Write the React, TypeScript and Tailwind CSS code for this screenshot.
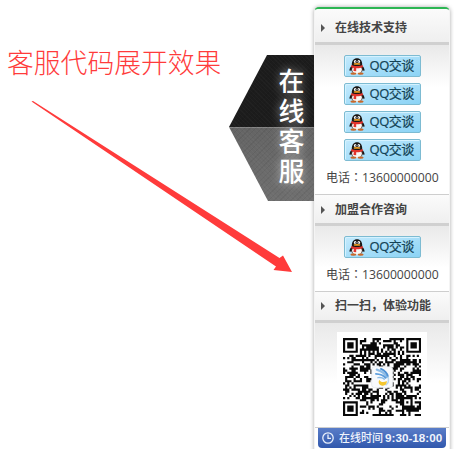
import type { ReactNode } from "react";

const QR_SIZE = 37;

function finderCell(x: number, y: number): boolean | null {
  const corners = [
    [0, 0],
    [QR_SIZE - 7, 0],
    [0, QR_SIZE - 7],
  ];
  for (const [cx, cy] of corners) {
    const dx = x - cx;
    const dy = y - cy;
    if (dx >= -1 && dx <= 7 && dy >= -1 && dy <= 7) {
      const ring = Math.max(Math.abs(dx - 3), Math.abs(dy - 3));
      return ring === 3 || ring <= 1;
    }
  }
  const ax = Math.abs(x - 30);
  const ay = Math.abs(y - 30);
  if (ax <= 2 && ay <= 2) return Math.max(ax, ay) !== 1;
  if (x === 6) return y % 2 === 0;
  if (y === 6) return x % 2 === 0;
  return null;
}

function qrPath(): string {
  let seed = 7919;
  let d = "";
  for (let y = 0; y < QR_SIZE; y++) {
    for (let x = 0; x < QR_SIZE; x++) {
      seed = (seed * 48271) % 2147483647;
      const fixed = finderCell(x, y);
      const on = fixed === null ? seed / 2147483647 < 0.54 : fixed;
      if (on) d += `M${x} ${y}h1.03v1.03h-1.03z`;
    }
  }
  return d;
}

function QrCode() {
  return (
    <div className="mx-auto flex h-[90px] w-[90px] items-center justify-center bg-white">
      <svg width="78" height="78" viewBox="0 0 37 37">
        <path d={qrPath()} fill="#080808" />
        <rect x="13.6" y="13.6" width="10" height="10" rx="1.4" fill="#f8fafc" stroke="#dde2e6" strokeWidth=".3" />
        <g fill="none" strokeLinecap="round">
          <path d="M16 15c2 .6 3.8 1.6 4.8 3.6" stroke="#8dbce6" strokeWidth="1" />
          <path d="M18 14.7c1.8.8 2.9 1.9 3.3 3.6" stroke="#4d91d4" strokeWidth=".9" />
          <path d="M15.6 17c2 .1 3.5.6 4.6 1.9" stroke="#5b9ddd" strokeWidth=".8" />
          <path d="M16.6 18.8c1.4-.2 2.2 0 3 .7" stroke="#8dbce6" strokeWidth=".7" />
          <path d="M21.4 18.5c.5 1.8 0 3-1 3.7" stroke="#b9d8ef" strokeWidth=".7" />
        </g>
        <path d="M17.2 19.8c.5 1.1 2 1.5 3.6.6c.1 1.6-.9 2.3-2.1 2.2c-1.5-.2-2.2-1.3-1.5-2.8z" fill="#f3c62f" />
      </svg>
    </div>
  );
}

function Penguin() {
  return (
    <svg width="16" height="17" viewBox="0 0 16 17" className="shrink-0">
      <path d="M3.5 7C1.5 8.5.2 10.8.5 12.6c.5.5 1.5-.1 2.2-.9zM12.5 7c2 1.5 3.3 3.8 3 5.6c-.5.5-1.5-.1-2.2-.9z" fill="#171717" />
      <ellipse cx="8" cy="10.8" rx="6" ry="5.2" fill="#3a2420" />
      <ellipse cx="8" cy="11.6" rx="4.9" ry="4.3" fill="#f8f8f5" />
      <ellipse cx="4.4" cy="15.6" rx="3" ry="1.2" fill="#c9682a" />
      <ellipse cx="11.6" cy="15.6" rx="3" ry="1.2" fill="#c9682a" />
      <path d="M2.8 7.2C2.6 2.6 4.8.3 8 .3s5.4 2.3 5.2 6.9c-1.3 1.3-9.1 1.3-10.4 0z" fill="#191716" />
      <ellipse cx="6.2" cy="3.5" rx="1.3" ry="1.5" fill="#fff" />
      <ellipse cx="9.8" cy="3.5" rx="1.3" ry="1.5" fill="#fff" />
      <circle cx="6.7" cy="3.8" r=".6" fill="#111" />
      <circle cx="9.3" cy="3.8" r=".6" fill="#111" />
      <ellipse cx="8" cy="5.9" rx="3.3" ry=".95" fill="#f0a022" />
      <path d="M2.4 7.1c2.8 1.3 8.4 1.3 11.2 0l.4 2c-1.9 1-4.6 1.3-6.8 1.2v3l-2.7-.2l.3-3C3.8 9.7 2.7 9.3 2 9z" fill="#e2342d" />
    </svg>
  );
}

function ChatButton() {
  return (
    <div className="mx-auto flex h-[22px] w-[77px] items-center rounded-[2px] border border-[#7dbbd2] bg-linear-to-br from-[#c3eafd] to-[#8bd3f5] pl-[4px] shadow-[inset_1px_1px_0_#d5f2ff]">
      <Penguin />
      <span className="ml-[5px] pb-[2px] text-[13px] leading-[18px] tracking-[-0.45px] whitespace-nowrap text-[#124255] [-webkit-text-stroke:0.2px_#124255]">
        QQ交谈
      </span>
    </div>
  );
}

function SectionTitle({ children, className }: { children: ReactNode; className: string }) {
  return (
    <div className={`flex items-center border-b-[3px] border-[#d0d0d0] bg-linear-to-b from-[#fbfbfb] to-[#efefef] pl-[6px] ${className}`}>
      <span className="h-0 w-0 border-y-4 border-l-4 border-y-transparent border-l-[#555]" />
      <h2 className="ml-[10px] text-[12px] leading-[18px] font-bold whitespace-nowrap text-[#444]">{children}</h2>
    </div>
  );
}

function Phone() {
  return (
    <p className="pl-[11px] text-[12px] leading-[18px] whitespace-nowrap text-[#444]">
      电话<span className="font-['Noto_Sans_CJK_TC',sans-serif]">：</span>
      <span className="font-['Open_Sans'] text-[12.2px]">13600000000</span>
    </p>
  );
}

function SideTab() {
  return (
    <div className="mt-[55px] h-[146px] w-[85px] bg-[linear-gradient(#1c1c1c_0,#1c1c1c_72px,#858585_72px,#858585_73px,#646464_73px,#6f6f6f_100%)] [clip-path:polygon(38px_0,100%_0,100%_100%,39px_100%,0_72px)]">
      <div className="flex h-full w-full justify-center bg-[repeating-linear-gradient(45deg,rgba(255,255,255,.025)_0_1px,transparent_1px_3px),repeating-linear-gradient(-45deg,rgba(0,0,0,.06)_0_1px,transparent_1px_4px)] pt-[11px] pl-[40px]">
        <div className="w-[26px] text-center text-[26px] leading-[30px] font-medium text-white [text-shadow:0_0_10px_rgba(255,255,255,.6)]">
          在线客服
        </div>
      </div>
    </div>
  );
}

export default function App() {
  return (
    <main className="relative flex h-[449px] w-[454px] overflow-hidden bg-white font-['Open_Sans','Noto_Sans_CJK_SC',sans-serif]">
      <div className="w-[229px] shrink-0 pt-[44px] pl-[7px]">
        <h1 className="text-[26.8px] leading-[36px] font-light whitespace-nowrap text-[#ff3b3b] font-['Noto_Sans_CJK_SC',sans-serif]">
          客服代码展开效果
        </h1>
      </div>
      <SideTab />
      <svg className="pointer-events-none absolute top-0 left-0" width="314" height="449">
        <path d="M31.5 101.5L33 101L279.5 258L283 255.5L292 272L273.5 270L276 266.5Z" fill="#ff3b3b" />
      </svg>
      <aside className="mt-[7px] h-[450px] w-[136px] shrink-0 overflow-hidden rounded-t-[5px] border-x border-t-2 border-x-[#f4f4f4] border-t-[#2cb653] bg-white shadow-[0_0_4px_rgba(0,0,0,.35)]">
        <SectionTitle className="h-[36px] pt-[4px]">在线技术支持</SectionTitle>
        <section className="h-[149px] bg-[linear-gradient(#e9e9e9,#fff_42px)] pt-[10px]">
          <div className="flex flex-col gap-[6px]">
            <ChatButton />
            <ChatButton />
            <ChatButton />
            <ChatButton />
          </div>
          <div className="mt-[7px]">
            <Phone />
          </div>
        </section>
        <SectionTitle className="h-[32px] border-t border-t-[#cecece] pt-px">加盟合作咨询</SectionTitle>
        <section className="h-[65px] bg-[linear-gradient(#e9e9e9,#fff_42px)] pt-[10px]">
          <ChatButton />
          <div className="mt-[7px]">
            <Phone />
          </div>
        </section>
        <SectionTitle className="h-[32px] border-t border-t-[#cecece]">扫一扫，体验功能</SectionTitle>
        <section className="h-[104px] bg-[linear-gradient(#e9e9e9,#fff_60px)] pt-[9px]">
          <QrCode />
        </section>
        <footer className="border-t border-[#cecece] px-[3px]">
          <div className="flex h-[20px] items-center rounded-b-[4px] bg-linear-to-b from-[#5a7dc8] to-[#3158ad] pl-[4px] text-[#f0f4fc]">
            <svg width="12" height="12" viewBox="0 0 12 12" fill="none" stroke="#e9effb" strokeWidth="1.3">
              <circle cx="6" cy="6" r="5.2" />
              <path d="M6 2.5V6.4H9" />
            </svg>
            <span className="ml-[5px] pb-px text-[11px] leading-[17px] font-medium whitespace-nowrap">在线时间</span>
            <span className="ml-[2px] text-[11.7px] leading-[18px] font-bold whitespace-nowrap font-['Liberation_Sans',sans-serif]">
              9:30-18:00
            </span>
          </div>
        </footer>
      </aside>
    </main>
  );
}
